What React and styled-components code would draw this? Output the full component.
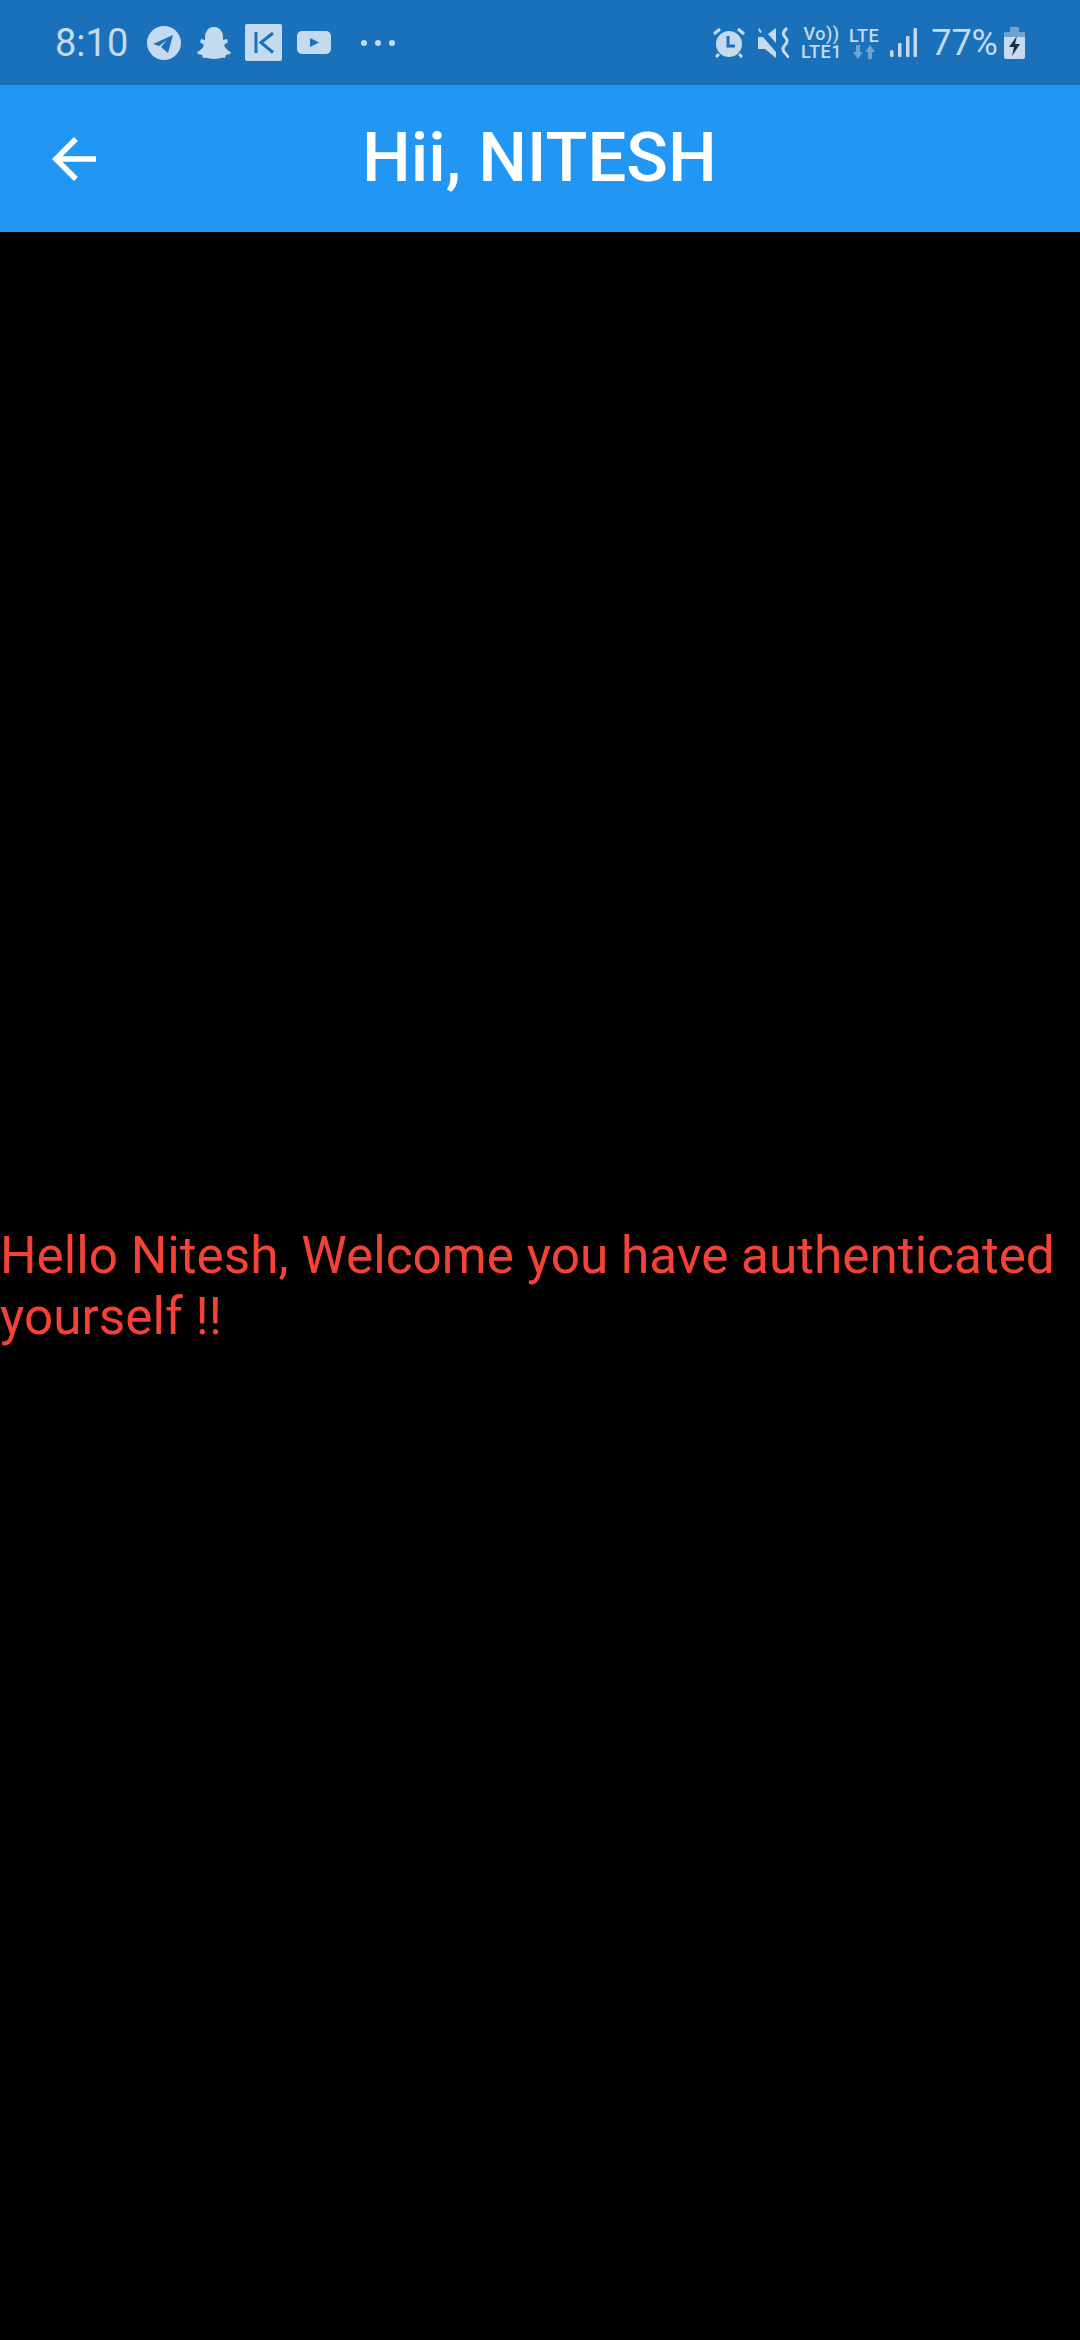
import React from 'react';
import styled, { createGlobalStyle } from 'styled-components';

const Global = createGlobalStyle`
  html, body {
    margin: 0;
    padding: 0;
    background: #000;
  }
`;

const Screen = styled.div`
  width: 1080px;
  height: 2340px;
  display: flex;
  flex-direction: column;
  background: #000;
  overflow: hidden;
  font-family: Roboto, "Liberation Sans", sans-serif;
`;

const StatusBar = styled.div`
  height: 85px;
  flex: none;
  background: #1a71b9;
  color: #c4daee;
  display: flex;
  align-items: center;
  justify-content: space-between;
  padding: 0 55px;
`;

const StatusGroup = styled.div`
  display: flex;
  align-items: center;
`;

// each status item carries its own distance from the previous one
const Slot = styled.div`
  display: flex;
  margin-left: ${p => p.$left || 0}px;
`;

const Time = styled.span`
  font-size: 38px;
  font-weight: 400;
  line-height: 1;
  width: 72px;
`;

const Percent = styled.span`
  font-size: 36px;
  font-weight: 400;
  line-height: 1;
`;

const NetStack = styled.div`
  display: flex;
  flex-direction: column;
  align-items: center;
  font-size: 18px;
  font-weight: 500;
  letter-spacing: 0.5px;
  line-height: 18px;
`;

const AppBar = styled.header`
  height: 147px;
  flex: none;
  background: #2196f3;
  color: #fff;
  display: flex;
  align-items: center;
  padding-left: 41px;
`;

const Title = styled.h1`
  margin: 0 0 0 255px;
  font-size: 68.75px;
  font-weight: 500;
  line-height: 1;
`;

const Body = styled.main`
  flex: 1;
  display: flex;
  align-items: center;
`;

const Message = styled.p`
  margin: 0;
  color: #f44336;
  font-size: 51.3px;
  line-height: 61px;
`;

const BackIcon = () => (
  <svg width="66" height="66" viewBox="0 0 24 24" fill="#fff">
    <path d="M20 11H7.83l5.59-5.59L12 4l-8 8 8 8 1.41-1.41L7.83 13H20v-2z" />
  </svg>
);

const Telegram = () => (
  <svg width="34" height="34" viewBox="0 0 34 34">
    <circle cx="17" cy="17" r="17" fill="currentColor" />
    <path d="M6 18 26 9 21 27 14 21 20 14 12 20z" fill="#1a71b9" />
  </svg>
);

const Snapchat = () => (
  <svg width="34" height="32" viewBox="0 0 34 32" fill="currentColor">
    <path d="M17 0C23 0 26 5 26 10V13L30 12 31 15 27 18C28 21 31 24 34 25L33 27 29 28 28 31C24 30 22 32 17 32 12 32 10 30 6 31L5 28 1 27 0 25C3 24 6 21 7 18L3 15 4 12 8 13V10C8 5 11 0 17 0z" />
  </svg>
);

const KakaoK = () => (
  <svg width="37" height="37" viewBox="0 0 37 37">
    <rect width="37" height="37" rx="2" fill="currentColor" />
    <path d="M11 8v21M28 9 16 18.500l12 10" fill="none" stroke="#1a71b9" strokeWidth="3" />
  </svg>
);

const YouTube = () => (
  <svg width="34" height="23" viewBox="0 0 34 23">
    <rect width="34" height="23" rx="5" fill="currentColor" />
    <path d="M13 7l9 4.500-9 4.500z" fill="#1a71b9" />
  </svg>
);

const Dots = () => (
  <svg width="34" height="6" viewBox="0 0 34 6" fill="currentColor">
    <circle cx="3" cy="3" r="3" />
    <circle cx="17" cy="3" r="3" />
    <circle cx="31" cy="3" r="3" />
  </svg>
);

const Alarm = () => (
  <svg width="32" height="31" viewBox="0 0 32 31">
    <circle cx="16" cy="17" r="13" fill="currentColor" />
    <path d="M15 9v10h7" fill="none" stroke="#1a71b9" strokeWidth="3" />
    <path d="M1 7l6-5M31 7l-6-5M6 27l-3 3M26 27l3 3" fill="none" stroke="currentColor" strokeWidth="3" />
  </svg>
);

const Mute = () => (
  <svg width="31" height="31" viewBox="0 0 31 31">
    <path d="M0 10H5L18 25V31L7 22H0zM10 7 18 1V16zM1 1 4 5 2 6 0 2z" fill="currentColor" />
    <path d="M29 1Q23 6 27 10T27 18 27 26 29 31" fill="none" stroke="currentColor" strokeWidth="3" />
  </svg>
);

const Arrows = () => (
  <svg width="24" height="14" viewBox="0 0 24 14" fill="currentColor" opacity="0.5">
    <path d="M4 0h4v7h3l-5 7-5-7h3zM16 14V7h-3l5-7 5 7h-3v7z" />
  </svg>
);

const Signal = () => (
  <svg width="27" height="29" viewBox="0 0 27 29" fill="currentColor">
    <rect x="0" y="22" width="3.500" height="7" rx="1.500" />
    <rect x="8" y="15" width="3.500" height="14" rx="1" />
    <rect x="16" y="8" width="3.500" height="21" rx="1" />
    <rect x="23.500" y="0" width="3.500" height="29" rx="1" />
  </svg>
);

const Battery = () => (
  <svg width="21" height="32" viewBox="0 0 21 32">
    <path d="M6 0h9v5h6v5H0V5h6z" fill="#6fa4d2" />
    <path d="M0 10h21v20a2 2 0 0 1-2 2H2a2 2 0 0 1-2-2z" fill="currentColor" />
    <path d="M13 9 5 20h5l-2 9 8-12h-5z" fill="#14304a" />
  </svg>
);

const App = () => (
  <Screen>
    <Global />
    <StatusBar>
      <StatusGroup>
        <Time>8:10</Time>
        <Slot $left={20}><Telegram /></Slot>
        <Slot $left={16}><Snapchat /></Slot>
        <Slot $left={14}><KakaoK /></Slot>
        <Slot $left={15}><YouTube /></Slot>
        <Slot $left={30}><Dots /></Slot>
      </StatusGroup>
      <StatusGroup>
        <Alarm />
        <Slot $left={13}><Mute /></Slot>
        <Slot $left={12}>
          <NetStack>
            <span>Vo))</span>
            <span>LTE1</span>
          </NetStack>
        </Slot>
        <Slot $left={7}>
          <NetStack>
            <span>LTE</span>
            <Arrows />
          </NetStack>
        </Slot>
        <Slot $left={11}><Signal /></Slot>
        <Slot $left={14}><Percent>77%</Percent></Slot>
        <Slot $left={6}><Battery /></Slot>
      </StatusGroup>
    </StatusBar>
    <AppBar>
      <BackIcon />
      <Title>Hii, NITESH</Title>
    </AppBar>
    <Body>
      <Message>Hello Nitesh, Welcome you have authenticated yourself !!</Message>
    </Body>
  </Screen>
);

export default App;
